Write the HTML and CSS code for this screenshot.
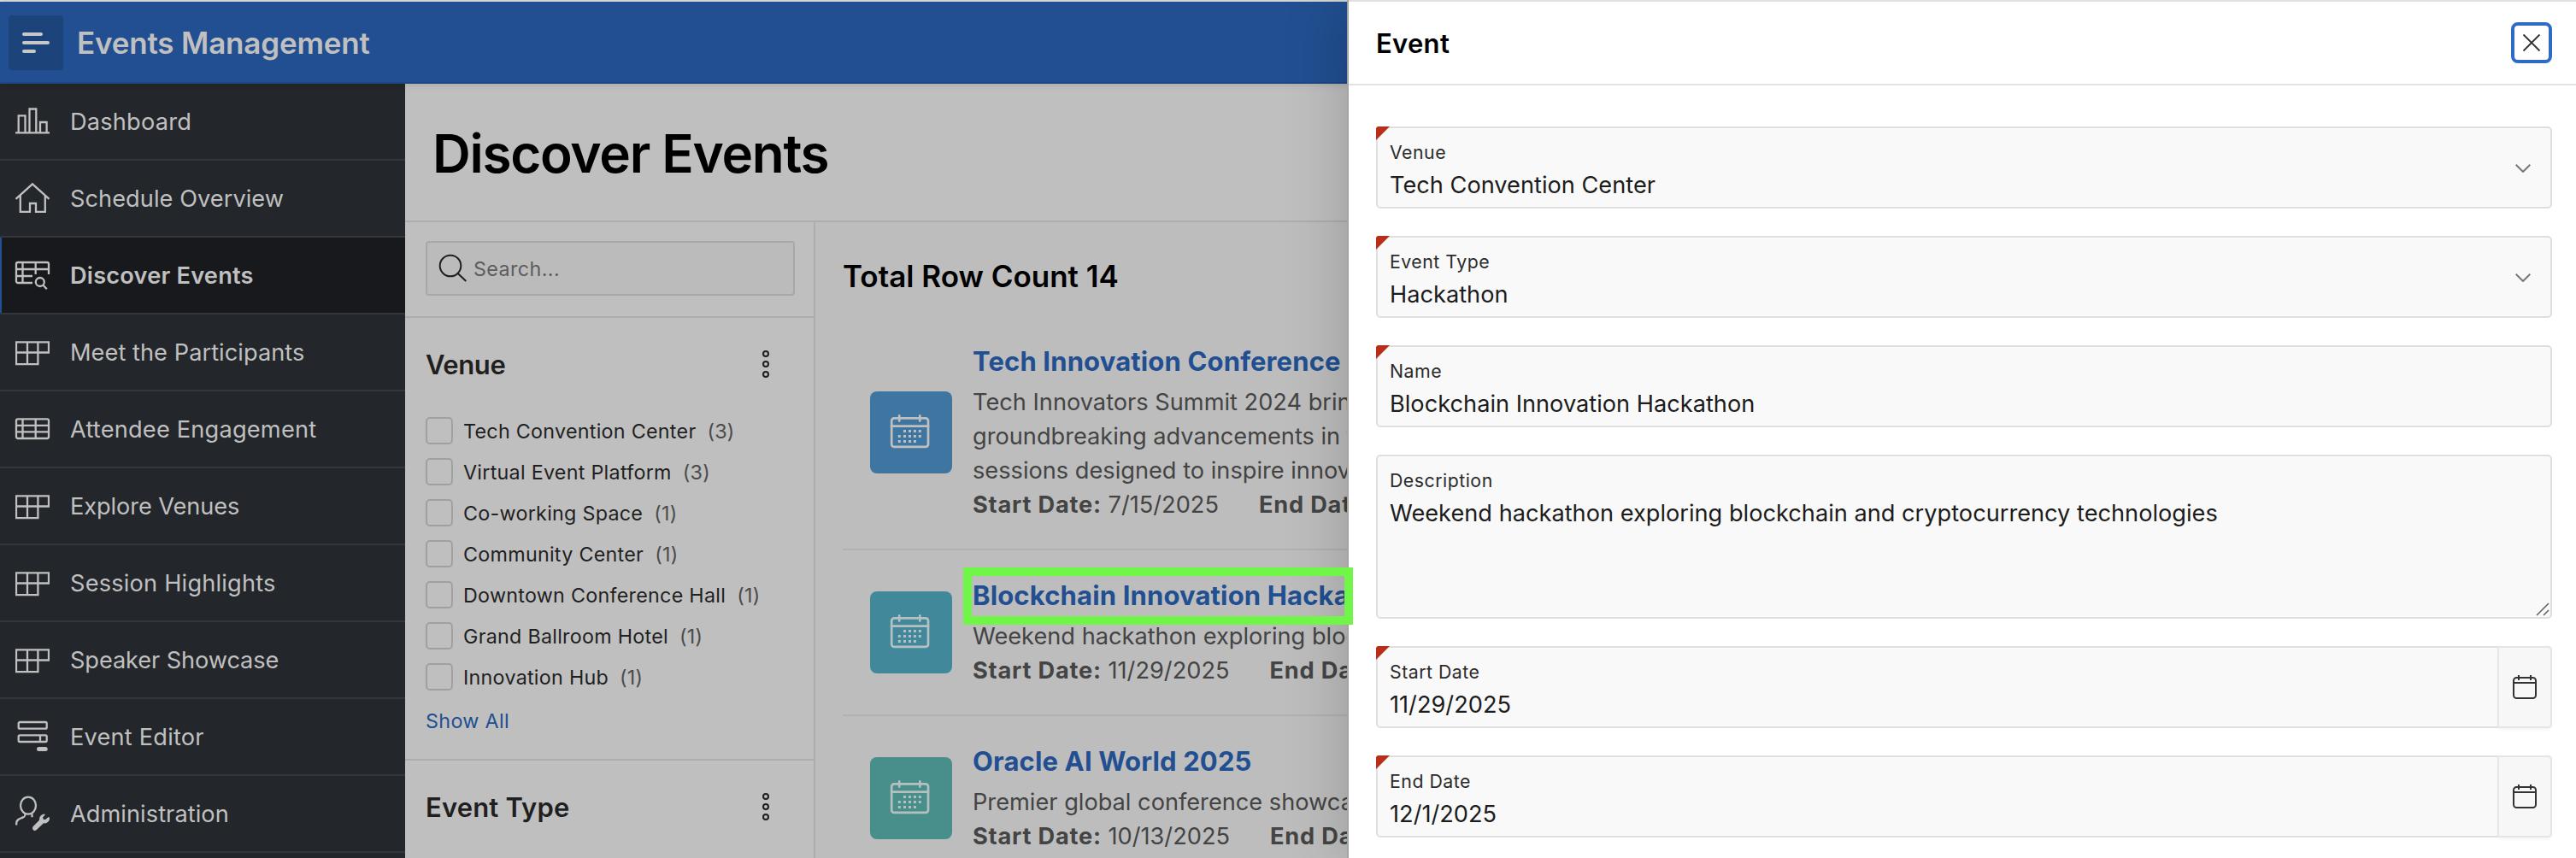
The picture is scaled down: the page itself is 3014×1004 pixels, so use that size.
FILE: index.html
```html
<!DOCTYPE html>
<html lang="en">
<head>
<meta charset="utf-8">
<title>Events Management</title>
<link rel="stylesheet" href="styles.css">
</head>
<body>
<svg class="defs" width="0" height="0" aria-hidden="true">
  <symbol id="i-cards" viewBox="0 0 40 40"><path d="M1 8.3h38v12.2H1zM1 20.5v13.6h25.4V8.3M14 8.3v25.8" /></symbol>
  <symbol id="i-event" viewBox="0 0 96 96">
    <rect x="25.2" y="31.3" width="42.8" height="33.6" rx="3"/>
    <path d="M25 40.7h43M34.2 28.4v6.2M58.3 28.4v6.2"/>
    <path class="dots" d="M40.5 44.9v3M46.5 44.9v3M52.4 44.9v3M58.3 44.9v3M34.3 50.9v3M40.5 50.9v3M46.5 50.9v3M52.4 50.9v3M58.3 50.9v3M34.3 56.9v3M40.5 56.9v3M46.5 56.9v3M52.4 56.9v3"/>
  </symbol>
  <symbol id="i-more" viewBox="0 0 12 36"><circle cx="6" cy="6" r="3"/><circle cx="6" cy="18" r="3"/><circle cx="6" cy="30" r="3"/></symbol>
  <symbol id="i-cal" viewBox="0 0 28 28"><rect x="1" y="3" width="26" height="24" rx="3.5"/><path d="M1 9h26M7 0v6M21 0v6"/></symbol>
  <symbol id="i-chev" viewBox="0 0 18 10"><path d="M.7.7 9 9l8.300-8.300"/></symbol>
</svg>

<div class="app">
  <header class="topbar">
    <button class="menu-btn" aria-label="Toggle navigation"><span></span><span></span><span></span></button>
    <span class="app-name">Events Management</span>
  </header>
  <div class="shell">
    <nav class="nav">
      <a class="nav-item"><svg viewBox="0 0 40 40"><path d="M0 33.4h40M3.700 33V13.300h7.800V33M16.500 33V5.500h7.800V33M29 33V21h7.600v12"/></svg><span class="t2">Dashboard</span></a>
      <a class="nav-item"><svg viewBox="0 0 40 40"><path d="M.5 20.800 20 3.300l19.500 17.500M5.800 16.500v19.300h11.200V26h7v9.800h10.800V16.500"/></svg><span class="t1">Schedule Overview</span></a>
      <a class="nav-item active"><svg viewBox="0 0 40 40"><path d="M20 29H3a2 2 0 0 1-2-2V7a2 2 0 0 1 2-2h34a2 2 0 0 1 2 2v12M1 13h38M1 21h19M8.500 5v24M23.700 5v14M32.500 31.700l4.300 4.500"/><circle cx="28.800" cy="28" r="5"/></svg><span class="t2">Discover Events</span></a>
      <a class="nav-item"><svg><use href="#i-cards"/></svg><span class="t1">Meet the Participants</span></a>
      <a class="nav-item"><svg viewBox="0 0 40 40"><rect x="1" y="8.300" width="38" height="22.700" rx="2"/><path d="M1 15.800h38M1 23.400h38M8.500 8.300V31M23.700 8.300V31"/></svg><span class="t2">Attendee Engagement</span></a>
      <a class="nav-item"><svg><use href="#i-cards"/></svg><span class="t0">Explore Venues</span></a>
      <a class="nav-item"><svg><use href="#i-cards"/></svg><span class="t2">Session Highlights</span></a>
      <a class="nav-item"><svg><use href="#i-cards"/></svg><span class="t0">Speaker Showcase</span></a>
      <a class="nav-item"><svg viewBox="0 0 40 40"><rect x="3.700" y="3" width="33" height="7.700" rx="1.500"/><rect x="3.700" y="18.300" width="33" height="7.700" rx="1.500"/><path d="M29 18.300V26"/><rect class="fill" x="25" y="32" width="12.700" height="5" rx="2.500"/></svg><span class="t2">Event Editor</span></a>
      <a class="nav-item"><svg viewBox="0 0 40 40"><ellipse cx="15" cy="10.600" rx="9" ry="10"/><path d="M11.500 20c0 3-.5 3.500-2.500 4.400-4.500 2-7.800 2.600-7.800 6.600v2.600M19.500 20.500v3.800"/><path class="fill" d="M20.600 35.200l7.600-7.600c-.8-3.500 1.800-7 6-7.200l.6 1-2.600 2.900.4 2.400 2.500.4 3.700-3 1.200.7c.4 4.300-3.300 7.300-7 6.500l-8.700 8.200c-2.600 1.700-5.500-1.700-3.700-4.300z"/></svg><span class="t1">Administration</span></a>
    </nav>
    <main class="main">
      <div class="title-bar"><h1>Discover Events</h1></div>
      <div class="columns">
        <aside class="facets">
          <div class="search-wrap">
            <div class="search"><svg viewBox="0 0 32 32"><circle cx="13" cy="13" r="12.300"/><path d="M21.500 21.800 31.300 31"/></svg><span>Search...</span></div>
          </div>
          <section class="facet">
            <div class="facet-head"><h2 class="tight">Venue</h2><svg><use href="#i-more"/></svg></div>
            <ul>
              <li><i></i><span>Tech Convention Center</span><em>(3)</em></li>
              <li><i></i><span>Virtual Event Platform</span><em>(3)</em></li>
              <li><i></i><span>Co-working Space</span><em>(1)</em></li>
              <li><i></i><span>Community Center</span><em>(1)</em></li>
              <li><i></i><span>Downtown Conference Hall</span><em>(1)</em></li>
              <li><i></i><span>Grand Ballroom Hotel</span><em>(1)</em></li>
              <li><i></i><span>Innovation Hub</span><em>(1)</em></li>
            </ul>
            <a class="show-all">Show All</a>
          </section>
          <section class="facet">
            <div class="facet-head"><h2>Event Type</h2><svg><use href="#i-more"/></svg></div>
          </section>
        </aside>
        <section class="results">
          <h3>Total Row Count 14</h3>
          <article class="row">
            <div class="tile blue"><svg><use href="#i-event"/></svg></div>
            <div class="info">
              <h4>Tech Innovation Conference</h4>
              <p>Tech Innovators Summit 2024 brings<br>groundbreaking advancements in the<br>sessions designed to inspire innovation</p>
              <p class="dates"><span><b>Start Date:</b> 7/15/2025</span><span><b>End Date:</b></span></p>
            </div>
          </article>
          <article class="row">
            <div class="tile cyan"><svg><use href="#i-event"/></svg></div>
            <div class="info">
              <h4>Blockchain Innovation Hackathon</h4>
              <p>Weekend hackathon exploring blockchain</p>
              <p class="dates"><span><b>Start Date:</b> 11/29/2025</span><span><b>End Date:</b></span></p>
            </div>
          </article>
          <article class="row">
            <div class="tile teal"><svg><use href="#i-event"/></svg></div>
            <div class="info">
              <h4>Oracle AI World 2025</h4>
              <p>Premier global conference showcasing</p>
              <p class="dates"><span><b>Start Date:</b> 10/13/2025</span><span><b>End Date:</b></span></p>
            </div>
          </article>
        </section>
      </div>
    </main>
  </div>
</div>

<aside class="drawer">
  <div class="drawer-head">
    <h2>Event</h2>
    <button class="close" aria-label="Close"><svg viewBox="0 0 20 20"><path d="M.5.5l19 19M19.500.5l-19 19"/></svg></button>
  </div>
  <div class="form">
    <div class="field req"><div class="text"><label>Venue</label><div class="val">Tech Convention Center</div></div><svg class="chev"><use href="#i-chev"/></svg></div>
    <div class="field req"><div class="text"><label>Event Type</label><div class="val">Hackathon</div></div><svg class="chev"><use href="#i-chev"/></svg></div>
    <div class="field req"><div class="text"><label>Name</label><div class="val">Blockchain Innovation Hackathon</div></div></div>
    <div class="field area"><div class="text"><label>Description</label><div class="val">Weekend hackathon exploring blockchain and cryptocurrency technologies</div></div><svg class="grip" viewBox="0 0 16 16"><path d="M1 15 15 1M9 15l6-6"/></svg></div>
    <div class="field req"><div class="text"><label>Start Date</label><div class="val">11/29/2025</div></div><div class="pick"><svg><use href="#i-cal"/></svg></div></div>
    <div class="field req"><div class="text"><label>End Date</label><div class="val">12/1/2025</div></div><div class="pick"><svg><use href="#i-cal"/></svg></div></div>
  </div>
</aside>
<div class="highlight"></div>
</body>
</html>
```
FILE: styles.css
```css
* { box-sizing: border-box; }
body {
  margin: 0;
  height: 1004px;
  overflow: hidden;
  position: relative;
  font-family: Inter, "Liberation Sans", sans-serif;
  color: #1f1f1f;
}
h1, h2, h3, h4, p, ul { margin: 0; padding: 0; font-weight: 600; }
.defs { display: block; position: absolute; }
svg { fill: none; stroke: currentColor; stroke-width: 2; overflow: visible; flex: none; }

.app { display: flex; flex-direction: column; height: 1004px; border-top: 2px solid #dfe3df; }

/* Header */
.topbar {
  display: flex;
  align-items: center;
  gap: 16px;
  height: 96px;
  flex: none;
  padding: 0 10px;
  background: #214f91;
  border-bottom: 2px solid #1e4783;
  color: #c0c0c0;
  position: relative;
  box-shadow: 0 0 8px rgba(0, 0, 0, .15);
}
.menu-btn {
  display: flex;
  flex-direction: column;
  gap: 6px;
  width: 64px;
  height: 64px;
  margin-top: 2px;
  padding: 20px 16px;
  border: 0;
  border-radius: 4px;
  background: #1d437b;
}
.menu-btn span { height: 4px; border-radius: 2px; background: #c8c8c8; width: 24px; }
.menu-btn span:nth-child(2) { width: 32px; }
.menu-btn span:nth-child(3) { width: 16px; }
.app-name { font-size: 35px; font-weight: 600; letter-spacing: -.18px; margin-top: 2px; }

.shell { display: flex; flex: 1; min-height: 0; }

/* Side navigation */
.nav { width: 474px; flex: none; background: #23262a; overflow: hidden; color: #c0c0c0; }
.nav-item {
  display: flex;
  align-items: center;
  gap: 24px;
  height: 90px;
  padding-left: 18px;
  border-bottom: 2px solid #33373b;
  font-size: 27.2px;
}
.nav-item svg { width: 40px; height: 40px; stroke-width: 2.3; }
.nav-item .fill { fill: currentColor; stroke: none; }
.active { background: #18191c; box-shadow: inset 2px 0 #214f91; font-weight: 600; }
.t0 { letter-spacing: -.1px; }
.t1 { letter-spacing: .05px; }
.t2 { letter-spacing: .2px; }

/* Page */
.main { flex: 1; min-width: 0; display: flex; flex-direction: column; background: #bfbfbf; }
.title-bar { height: 162px; flex: none; padding: 2px 0 0 32px; border-bottom: 2px solid #adadad; display: flex; align-items: center; }
h1 { font-size: 62px; letter-spacing: -1.290px; color: #000; line-height: 80px; padding-top: 1px; }
.columns { display: flex; flex: 1; min-height: 0; }

.facets { width: 480px; flex: none; border-right: 2px solid #adadad; color: #1f1f1f; }
.search-wrap { padding: 22px 22px 24px 24px; }
.search {
  display: flex;
  align-items: center;
  gap: 8px;
  height: 64px;
  padding-left: 14px;
  border: 2px solid #a8a8a8;
  border-radius: 4px;
  background: #bbb;
  font-size: 23.3px;
  letter-spacing: .4px;
  color: #5d5d5d;
}
.search svg { width: 32px; height: 32px; color: #1f1f1f; }
.facet { border-top: 2px solid #adadad; padding-left: 24px; }
.facet-head { display: flex; justify-content: space-between; align-items: center; height: 108px; padding: 0 50px 0 0; }
.facet-head h2 { font-size: 31px; letter-spacing: .16px; }
.facet-head .tight { letter-spacing: -.4px; }
.facet-head svg { width: 12px; height: 36px; }
.facet ul { list-style: none; font-weight: 400; font-size: 23.3px; letter-spacing: .27px; }
.facet li { display: flex; align-items: center; height: 48px; font-weight: 400; }
.facet i { width: 32px; height: 32px; border: 2px solid #a0a0a0; border-radius: 5px; margin-right: 12px; }
.facet em { font-style: normal; color: #4b4b4b; margin-left: 13px; }
.show-all { display: block; height: 72px; padding-top: 14px; line-height: 28px; font-size: 23.3px; letter-spacing: .34px; color: #214f91; }

/* Results */
.results { flex: 1; min-width: 0; padding-left: 32px; background: #bdbdbd; }
.results h3 { font-size: 35px; line-height: 50px; color: #000; padding: 38px 0 22px; }
.row {
  display: flex;
  align-items: center;
  gap: 24px;
  padding: 31.500px 0 31.500px 32px;
  border-bottom: 2px solid #b1b1b1;
  white-space: nowrap;
}
.tile { width: 96px; height: 96px; flex: none; border-radius: 8px; color: #bfbfbf; }
.tile svg { width: 96px; height: 96px; display: block; stroke-width: 2.700; stroke-linecap: round; }
.dots { stroke-width: 3; stroke-linecap: butt; }
.blue { background: #3f76a1; }
.cyan { background: #41889b; color: #b4c0c2; }
.teal { background: #488e8b; color: #b4c0bf; }
.info h4 { font-size: 31px; line-height: 41px; margin-bottom: 8px; letter-spacing: .15px; font-weight: 700; color: #214f91; }
.info p { font-size: 27.200px; line-height: 40px; font-weight: 400; color: #444; }
.dates { display: flex; gap: 47px; }
.dates b { font-weight: 700; letter-spacing: .8px; }

/* Event drawer, layered over the page */
.drawer {
  position: absolute;
  top: 0;
  right: 0;
  width: 1438px;
  height: 1004px;
  background: #fff;
  border-left: 2px solid #a3a3a3;
  box-shadow: 0 0 70px rgba(0, 0, 0, .2);
}
.drawer-head {
  display: flex;
  align-items: center;
  justify-content: space-between;
  height: 100px;
  padding: 0 28px 0 32px;
  border-top: 2px solid #e1e1e1;
  border-bottom: 2px solid #e3e3e3;
}
.drawer-head h2 { font-size: 31px; letter-spacing: .3px; color: #000; padding-top: 1px; }
.close {
  width: 48px;
  height: 48px;
  padding: 0;
  border: 4px solid #2e6bc4;
  border-radius: 8px;
  background: #fff;
  color: #333;
  display: grid;
  place-items: center;
}
.close svg { width: 20px; height: 20px; stroke-width: 1.800; }
.form { display: flex; flex-direction: column; gap: 32px; padding: 48px 28px 0 32px; }
.field {
  display: flex;
  position: relative;
  height: 96px;
  border: 2px solid #dfdfdf;
  border-radius: 5px;
  background: #f9f9f9;
}
.area { height: 192px; }
.req::before {
  content: "";
  position: absolute;
  left: -2px;
  top: -2px;
  width: 16px;
  height: 16px;
  background: #b92d1b;
  border-top-left-radius: 3px;
  clip-path: polygon(0 0, 100% 0, 0 100%);
}
.text { flex: 1; padding: 13px 0 0 14px; }
label { display: block; font-size: 21.300px; line-height: 30px; letter-spacing: .5px; color: #2b2b2b; }
.val { font-size: 27.200px; line-height: 40px; padding-top: 4px; color: #1c1c1c; }
.chev { width: 18px; height: 10px; margin: 42px 23px 0 0; color: #777; }
.grip { width: 16px; height: 16px; align-self: flex-end; margin: 0 1px 1px 0; color: #666; stroke-width: 1.600; }
.pick {
  width: 64px;
  margin: -2px;
  border: 2px solid #e5e5e5;
  border-radius: 0 5px 5px 0;
  background: #f7f7f7;
  box-shadow: 0 4px 4px -2px rgba(0, 0, 0, .05);
  color: #333;
  display: grid;
  place-items: center;
}
.pick svg { width: 28px; height: 28px; }

/* Marker frame around the selected event */
.highlight {
  position: absolute;
  left: 1127px;
  top: 664px;
  width: 456px;
  height: 67px;
  border: 10px solid #70f646;
}
```
